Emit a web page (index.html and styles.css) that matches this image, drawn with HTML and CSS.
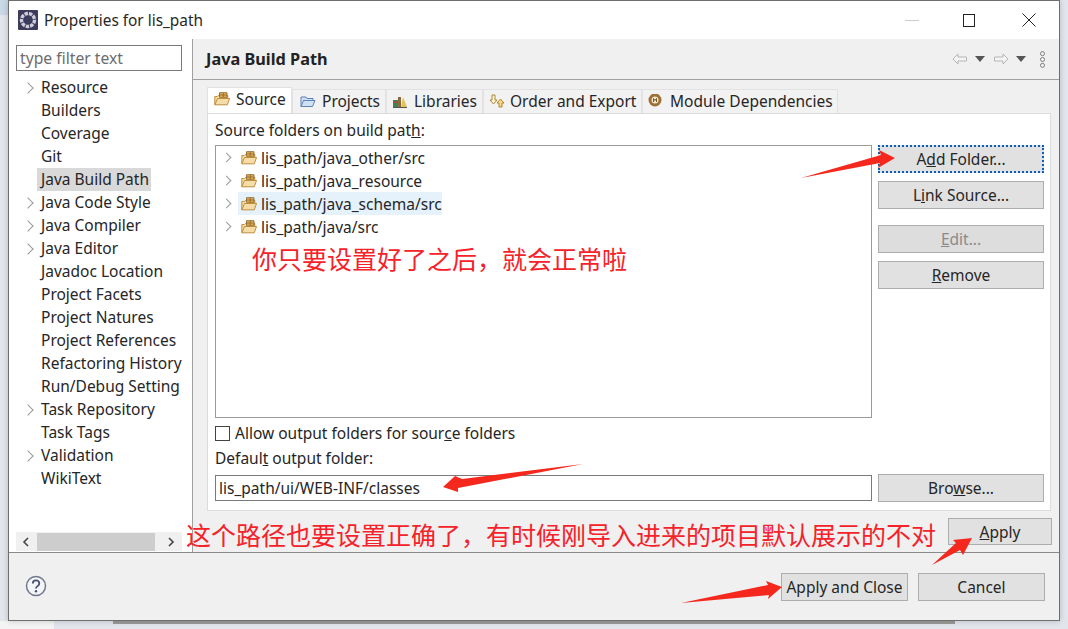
FILE: index.html
```html
<!DOCTYPE html>
<html lang="en">
<head>
<meta charset="utf-8">
<title>Properties for lis_path</title>
<link rel="stylesheet" href="styles.css">
</head>
<body>
<svg class="defs" width="0" height="0">
  <symbol id="pkg" viewBox="0 0 16 14">
    <path d="M.8 12.800V4.500h2.500l1-1h9.500v3H15.500l-2.200 6.300z" fill="#f6dca6" stroke="#c08f3e"/>
    <path d="M5.500 .7h7.500v4.600H5.500zM9.200 .7v4.600M5.500 3h7.500" fill="#e8b25c" stroke="#8f6a2c" stroke-width=".9"/>
    <path d="M.8 12.800l2.700-6.300h12" fill="none" stroke="#c08f3e"/>
  </symbol>
</svg>
<div class="window">
  <header class="titlebar">
    <svg class="appicon" viewBox="0 0 20 20"><rect width="20" height="20" rx="1" fill="#3d3b5c"/><circle cx="10" cy="10" r="6.500" fill="none" stroke="#cfcedb" stroke-width="3.400" stroke-dasharray="3.400 1"/></svg>
    <span class="title">Properties for lis_path</span>
    <span class="controls">
      <span class="min"></span>
      <span class="max"></span>
      <svg class="close" viewBox="0 0 14 14"><path d="M.5.5l13 13M13.500.5l-13 13" stroke="#222" fill="none"/></svg>
    </span>
  </header>
  <div class="main">
    <aside class="sidebar">
      <div class="filter">type filter text</div>
      <ul class="nav">
        <li class="exp">Resource</li>
        <li>Builders</li>
        <li>Coverage</li>
        <li>Git</li>
        <li><span class="sel">Java Build Path</span></li>
        <li class="exp">Java Code Style</li>
        <li class="exp">Java Compiler</li>
        <li class="exp">Java Editor</li>
        <li>Javadoc Location</li>
        <li>Project Facets</li>
        <li>Project Natures</li>
        <li>Project References</li>
        <li>Refactoring History</li>
        <li>Run/Debug Setting</li>
        <li class="exp">Task Repository</li>
        <li>Task Tags</li>
        <li class="exp">Validation</li>
        <li>WikiText</li>
      </ul>
      <div class="hscroll">
        <svg viewBox="0 0 8 10"><path d="M6 1L2 5l4 4" fill="none" stroke="#444" stroke-width="1.600"/></svg>
        <span class="thumb"></span>
        <svg viewBox="0 0 8 10"><path d="M2 1l4 4-4 4" fill="none" stroke="#444" stroke-width="1.600"/></svg>
      </div>
    </aside>
    <section class="content">
      <div class="head">
        <h1>Java Build Path</h1>
        <div class="navtools">
          <svg class="tool" viewBox="0 0 16 12"><path d="M1 6l5-5v3h8.500v4H6v3z" fill="#f4f4f4" stroke="#b5b5b5"/></svg>
          <svg class="drop" viewBox="0 0 10 6"><path d="M0 0h10L5 6z" fill="#555"/></svg>
          <svg class="tool" viewBox="0 0 16 12"><path d="M15 6l-5-5v3H1.500v4H10v3z" fill="#f4f4f4" stroke="#b5b5b5"/></svg>
          <svg class="drop" viewBox="0 0 10 6"><path d="M0 0h10L5 6z" fill="#555"/></svg>
          <svg class="dots" viewBox="0 0 6 16"><circle cx="3" cy="2.500" r="1.900"/><circle cx="3" cy="8" r="1.900"/><circle cx="3" cy="13.500" r="1.900"/></svg>
        </div>
      </div>
      <div class="pagebody">
        <div class="tabs">
          <div class="tab active t1"><svg class="ic"><use href="#pkg"/></svg>Source</div>
          <div class="tab t2"><svg class="ic" viewBox="0 0 16 14"><path d="M1 12.500V3h5l1 1.500h6v2H3.500L1 12.500h11.500L15 6.500H3.500" fill="#cfe0f4" stroke="#5f83b5"/></svg>Projects</div>
          <div class="tab t3"><svg class="ic" viewBox="0 0 16 14"><path d="M1 13V6h5v7z" fill="#3f7f5a"/><path d="M1 8h5" stroke="#b34a3a" stroke-width="1.500"/><path d="M6 13V3h3v10z" fill="#8a6a3a"/><path d="M9 13l2-10 4 10z" fill="#e3c25c"/><path d="M1 13.500h14" stroke="#555"/></svg>Libraries</div>
          <div class="tab t4"><svg class="ic" viewBox="0 0 16 14"><path d="M3 1h3v5h2L4.500 10 1 6h2z" fill="#fff3d0" stroke="#a8873e"/><path d="M11.500 5l3.500 4h-2v4h-3V9H8z" fill="#f6d98a" stroke="#b9832a"/></svg>Order and Export</div>
          <div class="tab t5"><svg class="ic" viewBox="0 0 16 14"><circle cx="7" cy="6" r="6.500" fill="#9c7036"/><circle cx="7" cy="6" r="3.500" fill="#f2e6cf"/><path d="M5.500 8V4.500L7 6.500l1.500-2V8" fill="none" stroke="#7a5526"/></svg>Module Dependencies</div>
        </div>
        <div class="panel">
          <div class="lbl">Source folders on build pat<u>h</u>:</div>
          <div class="split">
            <div class="tree">
              <div class="row"><i class="chev"></i><span class="item"><svg class="ic"><use href="#pkg"/></svg>lis_path/java_other/src</span></div>
              <div class="row"><i class="chev"></i><span class="item"><svg class="ic"><use href="#pkg"/></svg>lis_path/java_resource</span></div>
              <div class="row"><i class="chev"></i><span class="item hl"><svg class="ic"><use href="#pkg"/></svg>lis_path/java_schema/src</span></div>
              <div class="row"><i class="chev"></i><span class="item"><svg class="ic"><use href="#pkg"/></svg>lis_path/java/src</span></div>
            </div>
            <div class="btncol">
              <button class="btn focus">A<u>d</u>d Folder...</button>
              <button class="btn">L<u>i</u>nk Source...</button>
              <button class="btn disabled gap"><u>E</u>dit...</button>
              <button class="btn"><u>R</u>emove</button>
            </div>
          </div>
          <label class="check"><span class="box"></span>Allow output folders for sour<u>c</u>e folders</label>
          <div class="lbl out">Defaul<u>t</u> output folder:</div>
          <div class="outrow">
            <div class="input">lis_path/ui/WEB-INF/classes</div>
            <button class="btn browse">Bro<u>w</u>se...</button>
          </div>
        </div>
        <div class="applyrow"><button class="btn apply"><u>A</u>pply</button></div>
      </div>
    </section>
  </div>
  <footer class="footer">
    <svg class="help" viewBox="0 0 22 22"><circle cx="11" cy="11" r="9.500" fill="#f4f5f8" stroke="#70788c" stroke-width="1.500"/><path d="M7.800 8.500c0-4.300 6.500-4.300 6.500 0 0 2.700-3.300 2.500-3.300 5" fill="none" stroke="#44506e" stroke-width="1.800"/><circle cx="11" cy="16.300" r="1.200" fill="#44506e"/></svg>
    <span class="spacer"></span>
    <button class="btn wide">Apply and Close</button>
    <button class="btn wide">Cancel</button>
  </footer>
</div>
<div class="note n1">你只要设置好了之后，就会正常啦</div>
<div class="note n2">这个路径也要设置正确了，有时候刚导入进来的项目默认展示的不对</div>
<svg class="arrows" viewBox="0 0 1068 629">
  <path d="M801 178L881 155 879 150 895 158 878 168 880 163z"/>
  <path d="M583 464L462 479 455 476 443 487 458 492 458 488z"/>
  <path d="M932 565L956 543 953 540 972 538 963 555 960 550z"/>
  <path d="M681 603L768 585 766 581 782 587 768 599 769 595z"/>
</svg>
</body>
</html>
```
FILE: styles.css
```css
* { box-sizing: border-box; }
html, body { margin: 0; height: 100%; overflow: hidden; }
body {
  position: relative;
  background:
    linear-gradient(#9a9a9a, #9a9a9a) 113px 621px / 842px 3px no-repeat,
    linear-gradient(#f4f4f4, #f4f4f4) 0 621px / 54px 8px no-repeat,
    linear-gradient(#c9d8e6, #c9d8e6) 0 0 / 8px 15px no-repeat,
    #e2e5ec;
  font-family: "Noto Sans", "Liberation Sans", sans-serif;
  font-size: 15.5px;
  color: #262626;
}
.defs { position: absolute; }
.window {
  margin-left: 8px;
  width: 1052px;
  height: 621px;
  border: 1px solid #6e6e6e;
  background: #f0f0f0;
  display: flex;
  flex-direction: column;
  box-shadow: 0 0 6px rgba(0,0,0,.2);
}
.titlebar {
  height: 38px;
  flex: none;
  background: #fff;
  display: flex;
  align-items: center;
  padding-left: 9px;
}
.appicon { width: 20px; height: 20px; margin-right: 6px; }
.title { font-size: 15.4px; }
.controls { margin-left: auto; display: flex; align-items: center; }
.min { width: 14px; height: 1px; background: #ccc; margin-right: 44px; }
.max { width: 12px; height: 13px; border: 1.500px solid #222; margin-right: 47px; }
.close { width: 14px; height: 14px; margin-right: 23px; }
.main { flex: 1; display: flex; min-height: 0; }
.sidebar {
  width: 184px;
  flex: none;
  background: #fff;
  border-right: 1px solid #a0a0a0;
  display: flex;
  flex-direction: column;
  padding: 6px 0 0 7px;
}
.filter {
  width: 166px;
  height: 26px;
  border: 1px solid #7a7a7a;
  padding-left: 3px;
  line-height: 24px;
  color: #6d6d6d;
  font-size: 15.7px;
}
.nav { list-style: none; margin: 5px 0 0; padding: 0 0 0 25px; flex: 1; }
.nav li { height: 23px; line-height: 22px; position: relative; white-space: nowrap; }
.exp::before {
  content: "";
  position: absolute;
  left: -17px;
  top: 8px;
  width: 7px;
  height: 7px;
  border-top: 1.500px solid #9a9a9a;
  border-right: 1.500px solid #9a9a9a;
  transform: rotate(45deg);
}
.sel { background: #d9d9d9; display: inline-block; height: 23px; padding: 0 2px 0 4px; margin-left: -4px; }
.hscroll {
  height: 19px;
  width: 166px;
  margin-bottom: 1px;
  background: #f0f0f0;
  display: flex;
  align-items: center;
}
.hscroll svg { width: 8px; height: 10px; margin: 0 7px 0 6px; }
.thumb { width: 118px; height: 18px; background: #cdcdcd; margin-right: auto; }
.content { flex: 1; display: flex; flex-direction: column; min-width: 0; }
.head {
  height: 41px;
  flex: none;
  border-bottom: 1px solid #a0a0a0;
  display: flex;
  align-items: center;
  padding: 0 13px;
}
h1 { margin: 0; font-size: 16.3px; font-weight: 700; color: #222; }
.navtools { margin-left: auto; display: flex; align-items: center; }
.tool { width: 16px; height: 12px; margin-right: 7px; }
.drop { width: 10px; height: 6px; margin-right: 8px; }
.dots { width: 7px; height: 17px; fill: #f4f4f4; stroke: #777; stroke-width: .9; margin-left: 5px; }
.pagebody { flex: 1; padding: 7px 8px 0 14px; display: flex; flex-direction: column; }
.tabs { display: flex; height: 26px; align-items: flex-end; }
.tab {
  height: 24px;
  display: flex;
  align-items: center;
  background: #f2f2f2;
  border: 1px solid #e2e2e2;
  border-bottom: 0;
  padding: 0 0 2px 7px;
  white-space: nowrap;
}
.tab .ic { margin-right: 6px; }
.tab.active { height: 26px; background: #fff; padding: 0 0 4px 6px; }
.t1 { width: 85px; }
.t2 { width: 94px; }
.t3 { width: 97px; padding-left: 5px; }
.t4 { width: 159px; padding-left: 5px; }
.t4 .ic { margin-right: 5px; }
.t5 { width: 196px; padding-left: 5px; }
.ic { width: 16px; height: 14px; flex: none; }
.panel {
  height: 398px;
  background: #fff;
  border: 1px solid #dcdcdc;
  padding: 6px 0 0 7px;
  display: flex;
  flex-direction: column;
}
.lbl { height: 20px; line-height: 20px; }
.split { display: flex; margin-top: 5px; height: 273px; }
.tree { width: 657px; border: 1px solid #9a9a9a; }
.row { height: 23px; display: flex; align-items: center; }
.chev {
  width: 7px; height: 7px; margin: 0 8px 0 7px;
  border-top: 1.500px solid #9a9a9a;
  border-right: 1.500px solid #9a9a9a;
  transform: rotate(45deg);
}
.item { display: inline-flex; align-items: center; height: 23px; padding-right: 0; }
.item .ic { margin-left: 3px; margin-right: 4px; }
.hl { background: #e5f1fb; }
.btncol { margin-left: 6px; width: 166px; display: flex; flex-direction: column; gap: 8px; }
.btn {
  font: inherit;
  color: #262626;
  background: #e1e1e1;
  border: 1px solid #adadad;
  padding: 0;
  height: 28px;
  width: 100%;
  flex: none;
}
.focus { border: 2px dotted #0b5fb8; }
.disabled { color: #8a8a8a; background: #ddd; }
.gap { margin-top: 8px; }
.check { display: flex; align-items: center; margin-top: 4px; height: 22px; }
.box { width: 15px; height: 15px; border: 1px solid #444; margin-right: 5px; background: #fff; }
.out { margin-top: 4px; height: 21px; }
.outrow { display: flex; align-items: center; margin-top: 5px; gap: 6px; }
.input {
  width: 657px;
  height: 26px;
  border: 1px solid #7a7a7a;
  padding-left: 3px;
  line-height: 24px;
}
.browse { width: 166px; }
.applyrow { display: flex; justify-content: flex-end; margin-top: 7px; margin-right: -1px; }
.apply { width: 104px; height: 27px; }
.footer {
  height: 68px;
  flex: none;
  border-top: 1px solid #8a8a8a;
  display: flex;
  align-items: center;
  padding: 0 14px 0 16px;
  gap: 10px;
}
.help { width: 22px; height: 22px; margin-top: -1px; }
.spacer { flex: 1; }
.wide { width: 127px; }
.note {
  position: absolute;
  color: #f5222a;
  font-family: "Noto Sans CJK SC", sans-serif;
  font-size: 25px;
  line-height: 32px;
  white-space: nowrap;
}
.n1 { left: 252px; top: 242px; }
.n2 { left: 186px; top: 518px; }
.arrows { position: absolute; left: 0; top: 0; width: 1068px; height: 629px; fill: #f5281e; pointer-events: none; }
```
